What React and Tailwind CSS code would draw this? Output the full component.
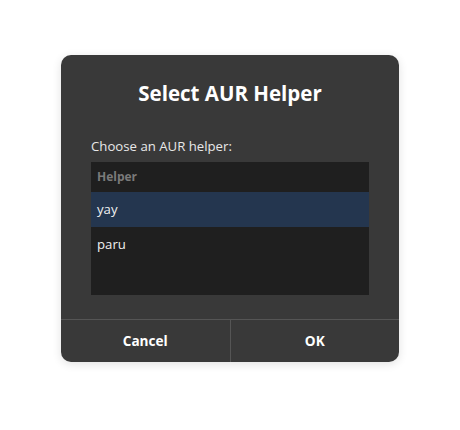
import React from "react";

const helpers = ["yay", "paru"];

export default function App() {
  return (
    <div
      className="w-[460px] h-[430px] bg-white flex justify-center pt-[55px]"
      style={{ fontFamily: '"Open Sans", "Noto Sans", sans-serif' }}
    >
      <div className="w-[338px] h-[307px] bg-[#393939] rounded-[10px] shadow-[0_2px_10px_rgba(0,0,0,0.12)] flex flex-col overflow-hidden">
        <h1 className="text-white font-bold text-[20.5px] text-center mt-[24px] leading-[28px]">
          Select AUR Helper
        </h1>
        <div className="px-[30px] mt-[30px] flex-1 flex flex-col">
          <p className="text-[#e8e8e8] text-[13.2px] leading-[18px]">Choose an AUR helper:</p>
          <div className="mt-[7px] h-[133px] bg-[#1f1f1f] flex flex-col">
            <div className="h-[30px] flex items-center px-[6px] text-[12px] font-bold text-[#7a7a7a]">
              Helper
            </div>
            {helpers.map((h, i) => (
              <div
                key={h}
                className={
                  i === 0
                    ? "h-[35px] flex items-center px-[6px] text-[13.2px] text-[#f0f0f0] bg-[#24364f]"
                    : "h-[35px] flex items-center px-[6px] text-[13.2px] text-[#f0f0f0]"
                }
              >
                {h}
              </div>
            ))}
          </div>
        </div>
        <div className="h-[43px] border-t border-[#555555] flex">
          <button className="flex-1 text-white font-bold text-[13.6px] border-r border-[#555555]">
            Cancel
          </button>
          <button className="flex-1 text-white font-bold text-[13.6px]">OK</button>
        </div>
      </div>
    </div>
  );
}
